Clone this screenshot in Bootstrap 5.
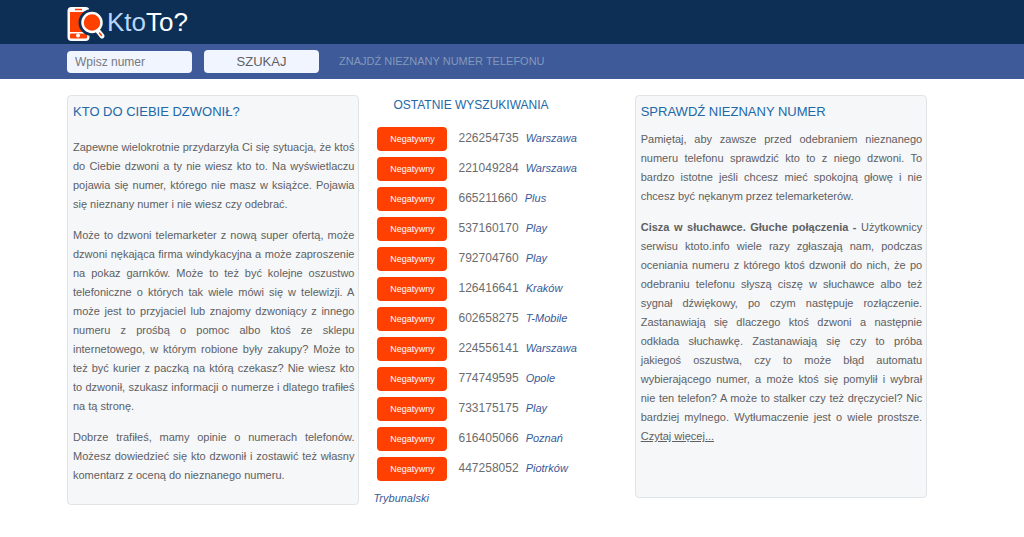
<!DOCTYPE html>
<html lang="pl">
<head>
<meta charset="utf-8">
<meta name="viewport" content="width=device-width, initial-scale=1">
<title>KtoTo? - kto do Ciebie dzwonił</title>
<link href="https://cdn.jsdelivr.net/npm/bootstrap@5.3.0/dist/css/bootstrap.min.css" rel="stylesheet">
<style>
body { font-family: "Liberation Sans", Arial, sans-serif; font-size: 11px; line-height: 19px; color: #5f6062; background: #fff; }
.site-wrap { width: 84%; margin-left: 67px; }
.top-strip { background: #0d2f55; height: 44px; }
.search-strip { background: #3e5a98; height: 35px; }
.wordmark { font-size: 26px; line-height: 44px; color: #fff; }
.wordmark .pale { color: #b9d6fb; }
.search-row { gap: 12px; }
.search-field { width: 125px; height: 22px; font-size: 12px; line-height: 20px; padding: 0 8px; background: #f0f5ff; border-radius: 4px; }
.search-field::placeholder { color: #77797d; }
.search-btn { width: 115px; height: 23px; font-size: 13px; line-height: 23px; background: #f0f5ff; color: #5f6062; border-radius: 4px; }
.search-btn:hover { background: #fff; }
.tagline { color: #8299bd; }
.columns { display: grid; grid-template-columns: 34fr 32fr 34fr; align-items: start; }
.panel { background: #f5f7f9; border: 1px solid #e1e4e7; border-radius: 4px; padding: 6px 4px 19px 5px; }
.panel p { text-align: justify; margin-bottom: 12px; }
.title { font-size: 13px; line-height: 20px; color: #2268a8; font-weight: 400; }
.recent { padding: 0 14px; }
.recent .title { font-size: 12px; }
.lookup { line-height: 30px; }
.rate { width: 70px; height: 24px; font-size: 9px; line-height: 24px; background: #ff4000; color: #fff; border-radius: 4px; }
.rate:hover { background: #e03800; color: #fff; }
.phone-no { font-size: 12px; color: #6b6c6e; }
.place { color: #3b5998; }
</style>
</head>
<body>
<header>
  <div class="top-strip">
    <div class="site-wrap">
      <a href="#" class="d-inline-flex align-items-center text-decoration-none" aria-label="KtoTo?">
        <svg width="40" height="44" viewBox="0 0 40 44" aria-hidden="true">
          <rect x="0.500" y="7" width="22" height="34" rx="4" fill="#fff"/>
          <rect x="3" y="12" width="17" height="20" fill="#ff4000"/>
          <path d="M8 9.500h7" stroke="#ff4000" stroke-width="1.500"/>
          <rect x="3" y="33.500" width="17" height="5" rx="1" fill="#ff4000"/>
          <circle cx="11" cy="35.500" r="2" fill="#fff"/>
          <path d="M29 31l5 6" stroke="#0d2f55" stroke-width="8" stroke-linecap="round"/>
          <circle cx="25" cy="22.500" r="13.500" fill="#0d2f55"/>
          <path d="M31 31l4 5" stroke="#fff" stroke-width="5" stroke-linecap="round"/>
          <path d="M32.500 33l2 2.500" stroke="#ff4000" stroke-width="1.500" stroke-linecap="round"/>
          <circle cx="25" cy="22.500" r="9.500" fill="#ff4000" stroke="#fff" stroke-width="2.500"/>
        </svg>
        <span class="wordmark"><span class="pale">Kto</span>To?</span>
      </a>
    </div>
  </div>
  <div class="search-strip">
    <form class="site-wrap search-row h-100 d-flex align-items-center">
      <label for="number" class="visually-hidden">Numer telefonu</label>
      <input id="number" type="text" class="search-field form-control border-0" placeholder="Wpisz numer">
      <button type="button" class="search-btn btn border-0 p-0">SZUKAJ</button>
      <span class="tagline ps-2">ZNAJDŹ NIEZNANY NUMER TELEFONU</span>
    </form>
  </div>
</header>
<main class="site-wrap columns pt-3">
  <section class="panel">
    <h2 class="title mb-3">KTO DO CIEBIE DZWONIŁ?</h2>
    <p>Zapewne wielokrotnie przydarzyła Ci się sytuacja, że ktoś do Ciebie dzwoni a ty nie wiesz kto to. Na wyświetlaczu pojawia się numer, którego nie masz w książce. Pojawia się nieznany numer i nie wiesz czy odebrać.</p>
    <p>Może to dzwoni telemarketer z nową super ofertą, może dzwoni nękająca firma windykacyjna a może zaproszenie na pokaz garnków. Może to też być kolejne oszustwo telefoniczne o których tak wiele mówi się w telewizji. A może jest to przyjaciel lub znajomy dzwoniący z innego numeru z prośbą o pomoc albo ktoś ze sklepu internetowego, w którym robione były zakupy? Może to też być kurier z paczką na którą czekasz? Nie wiesz kto to dzwonił, szukasz informacji o numerze i dlatego trafiłeś na tą stronę.</p>
    <p class="mb-0">Dobrze trafiłeś, mamy opinie o numerach telefonów. Możesz dowiedzieć się kto dzwonił i zostawić też własny komentarz z oceną do nieznanego numeru.</p>
  </section>
  <section class="recent">
    <h2 class="title ps-3 ms-1 mb-2">OSTATNIE WYSZUKIWANIA</h2>
    <div id="lookups"></div>
  </section>
  <section class="panel">
    <h2 class="title mb-2">SPRAWDŹ NIEZNANY NUMER</h2>
    <p>Pamiętaj, aby zawsze przed odebraniem nieznanego numeru telefonu sprawdzić kto to z niego dzwoni. To bardzo istotne jeśli chcesz mieć spokojną głowę i nie chcesz być nękanym przez telemarketerów.</p>
    <p class="mb-3 pb-3"><strong>Cisza w słuchawce. Głuche połączenia -</strong> Użytkownicy serwisu ktoto.info wiele razy zgłaszają nam, podczas oceniania numeru z którego ktoś dzwonił do nich, że po odebraniu telefonu słyszą ciszę w słuchawce albo też sygnał dźwiękowy, po czym następuje rozłączenie. Zastanawiają się dlaczego ktoś dzwoni a następnie odkłada słuchawkę. Zastanawiają się czy to próba jakiegoś oszustwa, czy to może błąd automatu wybierającego numer, a może ktoś się pomylił i wybrał nie ten telefon? A może to stalker czy też dręczyciel? Nic bardziej mylnego. Wytłumaczenie jest o wiele prostsze. <a href="#" class="text-reset">Czytaj więcej...</a></p>
  </section>
</main>
<script src="https://cdn.jsdelivr.net/npm/bootstrap@5.3.0/dist/js/bootstrap.bundle.min.js"></script>
<script>
const lookups = [
  ["226254735", "Warszawa"], ["221049284", "Warszawa"], ["665211660", "Plus"],
  ["537160170", "Play"], ["792704760", "Play"], ["126416641", "Kraków"],
  ["602658275", "T-Mobile"], ["224556141", "Warszawa"], ["774749595", "Opole"],
  ["733175175", "Play"], ["616405066", "Poznań"], ["447258052", "Piotrków Trybunalski"]
];
document.getElementById("lookups").innerHTML = lookups.map(([number, place]) =>
  `<div class="lookup"><button type="button" class="rate btn border-0 p-0 mx-1">Negatywny</button> <span class="phone-no mx-1">${number}</span> <em class="place">${place}</em></div>`
).join("");
</script>
</body>
</html>
